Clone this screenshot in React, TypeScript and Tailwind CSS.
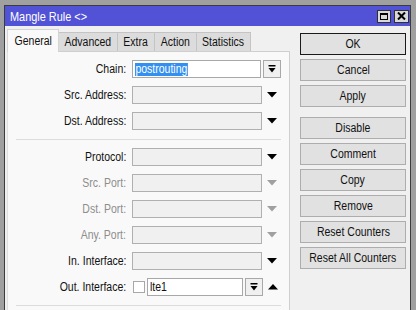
import React from "react";

const font = { fontFamily: '"Liberation Sans", Arial, sans-serif' };

function T({
  children,
  o = "center",
  className = "",
}: {
  children: React.ReactNode;
  o?: "left" | "right" | "center";
  className?: string;
}) {
  const origin = o === "left" ? "origin-left" : o === "right" ? "origin-right" : "origin-center";
  return (
    <span className={`inline-block whitespace-nowrap scale-x-[0.84] ${origin} ${className}`}>
      {children}
    </span>
  );
}

function DownArrow({ disabled }: { disabled?: boolean }) {
  return (
    <svg width="10" height="6" viewBox="0 0 10 6">
      <polygon points="0,0 10,0 5,5.5" fill={disabled ? "#a0a0a0" : "#000"} />
    </svg>
  );
}

function UpArrow() {
  return (
    <svg width="10" height="6" viewBox="0 0 10 6">
      <polygon points="0,5.5 10,5.5 5,0" fill="#000" />
    </svg>
  );
}

function DropBtn() {
  return (
    <div className="flex-none w-[18px] h-[18px] border border-[#a8a8a8] bg-[#f0f0f0] flex items-center justify-center">
      <svg width="8" height="8" viewBox="0 0 8 8">
        <rect x="0.5" y="0" width="7" height="1.5" fill="#000" />
        <polygon points="0.5,3 7.5,3 4,7.5" fill="#000" />
      </svg>
    </div>
  );
}

function Row({
  label,
  disabled,
  children,
}: {
  label: string;
  disabled?: boolean;
  children?: React.ReactNode;
}) {
  return (
    <div className="flex items-center h-[18px]">
      <div
        className={`flex-none w-[118px] text-right text-[12.5px] leading-none ${
          disabled ? "text-[#8d8d8d]" : "text-[#111]"
        }`}
      >
        <T o="right">{label}</T>
      </div>
      <div className="ml-[6px] flex items-center">{children}</div>
    </div>
  );
}

function EmptySelect({ disabled }: { disabled?: boolean }) {
  return (
    <>
      <div className="flex-none w-[130px] h-[18px] border border-[#b0b0b0] bg-[#f0f0f0]" />
      <div className="flex-none w-[20px] flex justify-center">
        <DownArrow disabled={disabled} />
      </div>
    </>
  );
}

function Btn({ children, def }: { children: React.ReactNode; def?: boolean }) {
  return (
    <div
      className={`w-[106px] h-[22px] flex items-center justify-center text-[12.5px] text-[#111] bg-[#e1e1e1] border ${
        def ? "border-[#1a1a1a]" : "border-[#adadad]"
      }`}
    >
      <T>{children}</T>
    </div>
  );
}

export default function App() {
  const tabs = [
    { name: "Advanced", w: "w-[59px]" },
    { name: "Extra", w: "w-[37px]" },
    { name: "Action", w: "w-[42px]" },
    { name: "Statistics", w: "w-[54px]" },
  ];
  return (
    <div className="w-[416px] h-[310px] bg-[#a0a0a0] pl-[4px] pt-[5px] overflow-hidden" style={font}>
      <div className="w-[407px] h-[320px] border border-[#3c3c3c] bg-[#f0f0f0] flex flex-col">
        {/* title bar */}
        <div className="h-[20px] bg-[#5252d6] flex items-center pl-[5px] pr-[1px]">
          <div className="text-white text-[13px] leading-none">
            <T o="left">Mangle Rule &lt;&gt;</T>
          </div>
          <div className="ml-auto flex items-center gap-[3px]">
            <div className="w-[14px] h-[13px] bg-[#d8d8d8] border border-[#303030] flex items-center justify-center">
              <div className="w-[8px] h-[7px] border border-[#000] border-t-2" />
            </div>
            <div className="w-[15px] h-[13px] bg-[#d8d8d8] border border-[#303030] flex items-center justify-center">
              <svg width="9" height="8" viewBox="0 0 9 8">
                <path d="M1 0.5 L8 7.5 M8 0.5 L1 7.5" stroke="#000" strokeWidth="2" />
              </svg>
            </div>
          </div>
        </div>
        {/* body */}
        <div className="flex pl-[2px] pt-[3px]">
          {/* left */}
          <div className="flex flex-col w-[283px]">
            <div className="flex items-end h-[22px]">
              <div className="w-[52px] h-[23px] -mb-[1px] bg-[#f9f9f9] border-l border-t border-r border-[#d4d4d4] flex items-center justify-center text-[12.5px] text-[#111] relative z-10">
                <T>General</T>
              </div>
              {tabs.map((t) => (
                <div
                  key={t.name}
                  className={`${t.w} h-[19px] bg-[#dcdcdc] border-r border-t border-[#c4c4c4] flex items-center justify-center text-[12.5px] text-[#111]`}
                >
                  <T>{t.name}</T>
                </div>
              ))}
            </div>
            <div className="h-[270px] bg-[#f9f9f9] border-t border-l border-r border-[#cfcfcf] border-l-[#e0e0e0] pt-[8px] flex flex-col gap-[8px]">
              <Row label="Chain:">
                <div className="flex-none w-[129px] h-[18px] border border-[#a8a8a8] bg-white flex items-center pl-[2px]">
                  <span className="inline-block scale-x-[0.84] origin-left bg-[#3390f0] text-white text-[12.5px] leading-[13px] px-[0.5px] whitespace-nowrap">
                    postrouting
                  </span>
                </div>
                <div className="ml-[2px]">
                  <DropBtn />
                </div>
              </Row>
              <Row label="Src. Address:">
                <EmptySelect />
              </Row>
              <Row label="Dst. Address:">
                <EmptySelect />
              </Row>
              <div className="ml-[8px] w-[265px] h-px bg-[#dcdcdc] mt-[1px]" />
              <Row label="Protocol:">
                <EmptySelect />
              </Row>
              <Row label="Src. Port:" disabled>
                <EmptySelect disabled />
              </Row>
              <Row label="Dst. Port:" disabled>
                <EmptySelect disabled />
              </Row>
              <Row label="Any. Port:" disabled>
                <EmptySelect disabled />
              </Row>
              <Row label="In. Interface:">
                <EmptySelect />
              </Row>
              <Row label="Out. Interface:">
                <div className="flex-none w-[12px] h-[12px] border border-[#a8a8a8] bg-white ml-[1px]" />
                <div className="ml-[2px] flex-none w-[96px] h-[18px] border border-[#a8a8a8] bg-white flex items-center pl-[2px] text-[12.5px] text-[#111] leading-none">
                  <T o="left">lte1</T>
                </div>
                <div className="ml-[2px]">
                  <DropBtn />
                </div>
                <div className="flex-none w-[20px] flex justify-center">
                  <UpArrow />
                </div>
              </Row>
              <div className="ml-[8px] w-[265px] h-px bg-[#dcdcdc] mt-[1px]" />
            </div>
          </div>
          {/* right buttons */}
          <div className="ml-[10px] pt-[4px] flex flex-col">
            <div className="flex flex-col gap-[4px]">
              <Btn def>OK</Btn>
              <Btn>Cancel</Btn>
              <Btn>Apply</Btn>
            </div>
            <div className="flex flex-col gap-[4px] mt-[10px]">
              <Btn>Disable</Btn>
              <Btn>Comment</Btn>
              <Btn>Copy</Btn>
              <Btn>Remove</Btn>
              <Btn>Reset Counters</Btn>
              <Btn>Reset All Counters</Btn>
            </div>
          </div>
        </div>
      </div>
    </div>
  );
}
